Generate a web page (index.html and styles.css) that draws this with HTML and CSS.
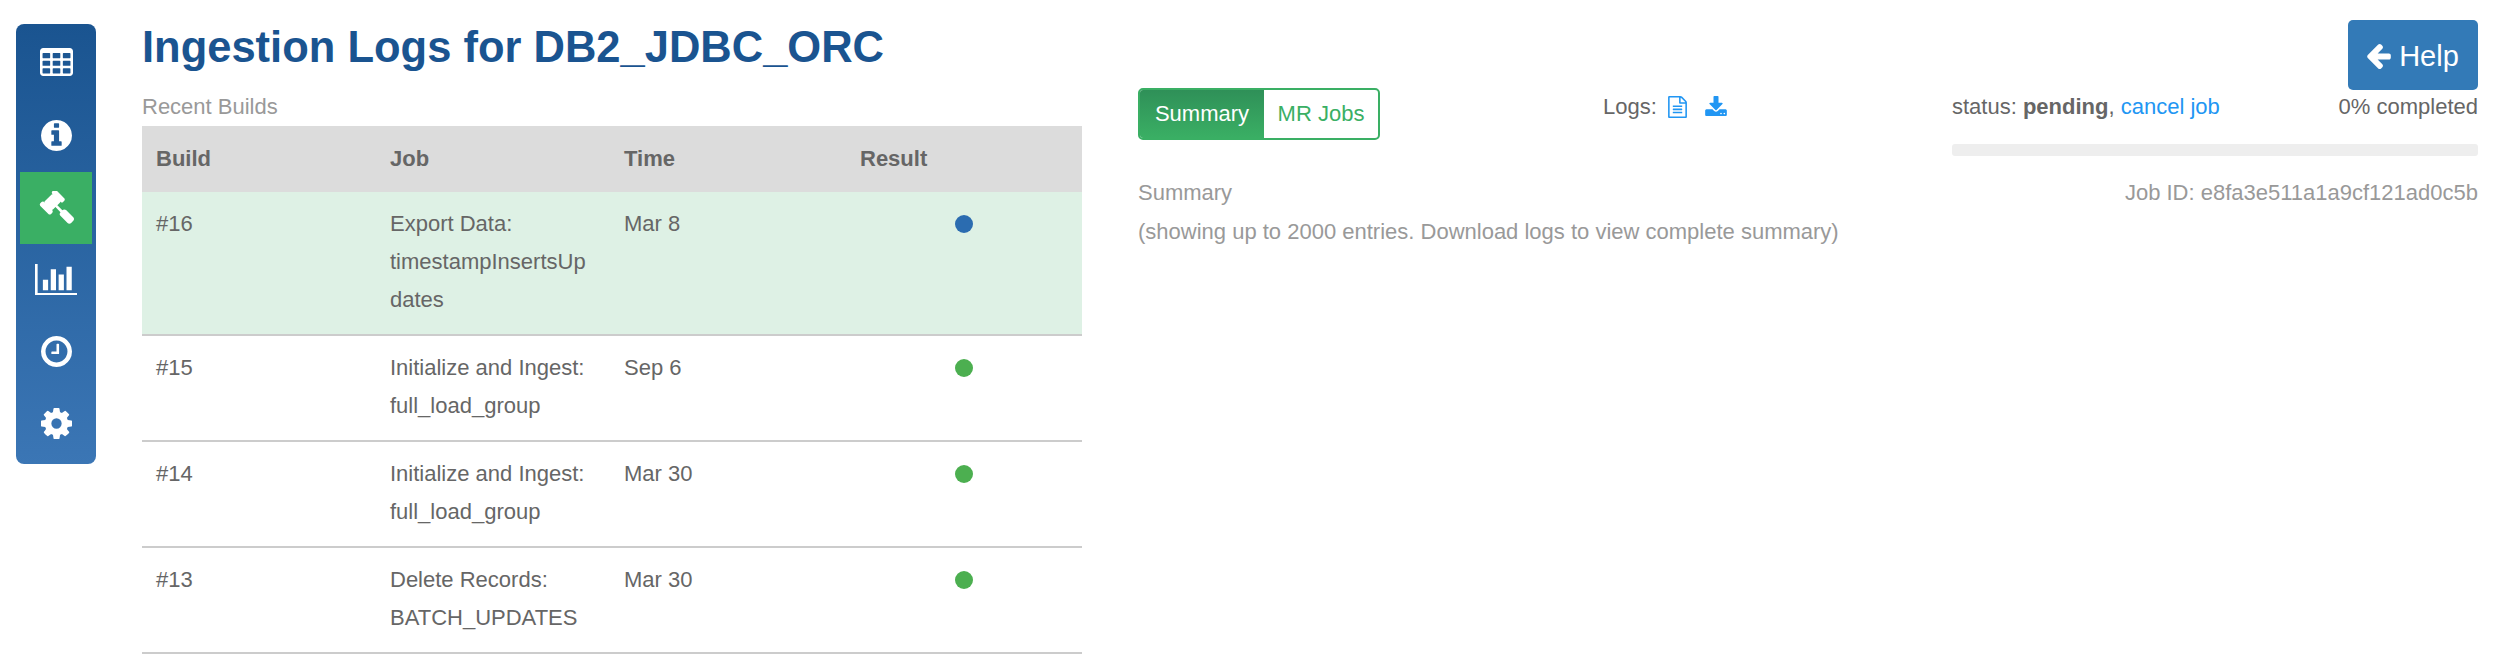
FILE: index.html
```html
<!DOCTYPE html>
<html lang="en">
<head>
<meta charset="utf-8">
<title>Ingestion Logs</title>
<link rel="stylesheet" href="styles.css">
</head>
<body>
<div class="page">
  <nav class="sidebar">
    <a class="nav-item"><svg class="ico-table" viewBox="64 128 1664 1408"><path fill="#fff" fill-rule="evenodd" d="M576 1376v-192q0-14-9-23t-23-9h-320q-14 0-23 9t-9 23v192q0 14 9 23t23 9h320q14 0 23-9t9-23zm0-384v-192q0-14-9-23t-23-9h-320q-14 0-23 9t-9 23v192q0 14 9 23t23 9h320q14 0 23-9t9-23zm512 384v-192q0-14-9-23t-23-9h-320q-14 0-23 9t-9 23v192q0 14 9 23t23 9h320q14 0 23-9t9-23zm-512-768v-192q0-14-9-23t-23-9h-320q-14 0-23 9t-9 23v192q0 14 9 23t23 9h320q14 0 23-9t9-23zm512 384v-192q0-14-9-23t-23-9h-320q-14 0-23 9t-9 23v192q0 14 9 23t23 9h320q14 0 23-9t9-23zm512 384v-192q0-14-9-23t-23-9h-320q-14 0-23 9t-9 23v192q0 14 9 23t23 9h320q14 0 23-9t9-23zm-512-768v-192q0-14-9-23t-23-9h-320q-14 0-23 9t-9 23v192q0 14 9 23t23 9h320q14 0 23-9t9-23zm512 384v-192q0-14-9-23t-23-9h-320q-14 0-23 9t-9 23v192q0 14 9 23t23 9h320q14 0 23-9t9-23zm0-384v-192q0-14-9-23t-23-9h-320q-14 0-23 9t-9 23v192q0 14 9 23t23 9h320q14 0 23-9t9-23zm128-320v1088q0 66-47 113t-113 47h-1344q-66 0-113-47t-47-113v-1088q0-66 47-113t113-47h1344q66 0 113 47t47 113z"/></svg></a>
    <a class="nav-item"><svg class="ico-round" viewBox="128 128 1536 1536"><path fill="#fff" fill-rule="evenodd" d="M1152 1376v-160q0-14-9-23t-23-9h-96v-512q0-14-9-23t-23-9h-320q-14 0-23 9t-9 23v160q0 14 9 23t23 9h96v320h-96q-14 0-23 9t-9 23v160q0 14 9 23t23 9h448q14 0 23-9t9-23zm-128-896v-160q0-14-9-23t-23-9h-192q-14 0-23 9t-9 23v160q0 14 9 23t23 9h192q14 0 23-9t9-23zm640 416q0 209-103 385.500t-279.500 279.500-385.500 103-385.500-103-279.500-279.500-103-385.500 103-385.500 279.500-279.500 385.500-103 385.500 103 279.500 279.500 103 385.500z"/></svg></a>
    <a class="nav-item active"><svg class="ico-gavel" viewBox="0 0 1771 1643"><path fill="#fff" d="M1771 1408q0 53-37 90l-107 108q-39 37-91 37-53 0-90-37l-363-364q-38-36-38-90 0-53 43-96l-256-256-126 126q-14 14-34 14t-34-14q2 2 12.500 12t12.500 13 10 11.500 10 13.500 6 13.500 5.500 16.500 1.500 18q0 38-28 68-3 3-16.500 18t-19 20.500-18.500 16.500-22 15.500-22 9-26 4.500q-40 0-68-28l-408-408q-28-28-28-68 0-13 4.500-26t9-22 15.500-22 16.500-18.500 20.500-19 18-16.500q30-28 68-28 10 0 18 1.500t16.500 5.500 13.500 6 13.500 10 11.500 10 13 12.500 12 12.500q-14-14-14-34t14-34l348-348q14-14 34-14t34 14q-2-2-12.500-12t-12.500-13-10-11.500-10-13.500-6-13.500-5.500-16.500-1.500-18q0-38 28-68 3-3 16.500-18t19-20.500 18.500-16.500 22-15.500 22-9 26-4.500q40 0 68 28l408 408q28 28 28 68 0 13-4.500 26t-9 22-15.500 22-16.500 18.500-20.500 19-18 16.500q-30 28-68 28-10 0-18-1.500t-16.500-5.500-13.500-6-13.500-10-11.500-10-13-12.500-12-12.500q14 14 14 34t-14 34l-126 126 256 256q43-43 96-43 52 0 91 37l363 363q37 39 37 91z"/></svg></a>
    <a class="nav-item"><svg class="ico-chart" viewBox="0 128 2048 1536"><path fill="#fff" d="M640 896v512h-256v-512h256zm384-512v1024h-256v-1024h256zm1024 1152v128h-2048v-1536h128v1408h1920zm-640-896v768h-256v-768h256zm384-384v1152h-256v-1152h256z"/></svg></a>
    <a class="nav-item"><svg class="ico-round" viewBox="128 128 1536 1536"><path fill="#fff" fill-rule="evenodd" d="M1024 544v448q0 14-9 23t-23 9h-320q-14 0-23-9t-9-23v-64q0-14 9-23t23-9h224v-352q0-14 9-23t23-9h64q14 0 23 9t9 23zm416 352q0-148-73-273t-198-198-273-73-273 73-198 198-73 273 73 273 198 198 273 73 273-73 198-198 73-273zm224 0q0 209-103 385.500t-279.500 279.500-385.500 103-385.500-103-279.500-279.500-103-385.500 103-385.500 279.500-279.500 385.500-103 385.500 103 279.500 279.500 103 385.500z"/></svg></a>
    <a class="nav-item"><svg class="ico-round" viewBox="128 128 1536 1536"><path fill="#fff" fill-rule="evenodd" d="M1152 896q0-106-75-181t-181-75-181 75-75 181 75 181 181 75 181-75 75-181zm512-109v222q0 12-8 23t-20 13l-185 28q-19 54-39 91 35 50 107 138 10 12 10 25t-9 23q-27 37-99 108t-94 71q-12 0-26-9l-138-108q-44 23-91 38-16 136-29 186-7 28-36 28h-222q-14 0-24.500-8.500t-11.500-21.500l-28-184q-49-16-90-37l-141 107q-10 9-25 9-14 0-25-11-126-114-165-168-7-10-7-23 0-12 8-23 15-21 51-66.500t54-70.500q-27-50-41-99l-183-27q-13-2-21-12.500t-8-23.500v-222q0-12 8-23t19-13l186-28q14-46 39-92-40-57-107-138-10-12-10-24 0-10 9-23 26-36 98.500-107.500t94.500-71.500q13 0 26 10l138 107q44-23 91-38 16-136 29-186 7-28 36-28h222q14 0 24.500 8.500t11.500 21.500l28 184q49 16 90 37l142-107q9-9 24-9 13 0 25 10 129 119 165 170 7 8 7 22 0 12-8 23-15 21-51 66.500t-54 70.500q26 50 41 98l183 28q13 2 21 12.500t8 23.500z"/></svg></a>
  </nav>
  <main class="left">
    <h1 class="title">Ingestion Logs for DB2_JDBC_ORC</h1>
    <div class="caption">Recent Builds</div>
    <table class="builds">
      <thead>
        <tr><th class="c1">Build</th><th class="c2">Job</th><th class="c3">Time</th><th class="c4">Result</th></tr>
      </thead>
      <tbody>
        <tr class="current"><td>#16</td><td>Export Data: timestampInsertsUpdates</td><td>Mar 8</td><td><span class="dot blue"></span></td></tr>
        <tr><td>#15</td><td>Initialize and Ingest: full_load_group</td><td>Sep 6</td><td><span class="dot green"></span></td></tr>
        <tr><td>#14</td><td>Initialize and Ingest: full_load_group</td><td>Mar 30</td><td><span class="dot green"></span></td></tr>
        <tr><td>#13</td><td>Delete Records: BATCH_UPDATES</td><td>Mar 30</td><td><span class="dot green"></span></td></tr>
      </tbody>
    </table>
  </main>
  <section class="right">
    <div class="help-row"><a class="help"><svg class="help-arrow" viewBox="192 181 1472 1558"><path fill="#fff" d="M1664 896v128q0 53-32.500 90.500t-84.500 37.500h-704l293 294q38 36 38 90t-38 90l-75 76q-37 37-90 37-52 0-91-37l-651-652q-37-37-37-90 0-52 37-91l651-650q38-38 91-38 52 0 90 38l75 74q38 38 38 91t-38 91l-293 293h704q52 0 84.500 37.500t32.500 90.500z"/></svg>Help</a></div>
    <div class="toolbar">
      <div class="tabs"><span class="tab on">Summary</span><span class="tab">MR Jobs</span></div>
      <div class="logs">
        <span>Logs:</span>
        <svg class="log-file" viewBox="128 0 1536 1792"><path fill="#2196f3" fill-rule="evenodd" d="M1596 380q28 28 48 76t20 88v1152q0 40-28 68t-68 28h-1344q-40 0-68-28t-28-68v-1600q0-40 28-68t68-28h896q40 0 88 20t76 48zm-444-244v376h376q-10-29-22-41l-313-313q-12-12-41-22zm384 1528v-1024h-416q-40 0-68-28t-28-68v-416h-768v1536h1280zm-1024-864q0-14 9-23t23-9h704q14 0 23 9t9 23v64q0 14-9 23t-23 9h-704q-14 0-23-9t-9-23v-64zm736 224q14 0 23 9t9 23v64q0 14-9 23t-23 9h-704q-14 0-23-9t-9-23v-64q0-14 9-23t23-9h704zm0 256q14 0 23 9t9 23v64q0 14-9 23t-23 9h-704q-14 0-23-9t-9-23v-64q0-14 9-23t23-9h704z"/></svg>
        <svg class="log-dl" viewBox="64 0 1664 1536"><path fill="#2196f3" fill-rule="evenodd" d="M1344 1344q0-26-19-45t-45-19-45 19-19 45 19 45 45 19 45-19 19-45zm256 0q0-26-19-45t-45-19-45 19-19 45 19 45 45 19 45-19 19-45zm128-224v320q0 40-28 68t-68 28h-1472q-40 0-68-28t-28-68v-320q0-40 28-68t68-28h465l135 136q58 56 136 56t136-56l136-136h464q40 0 68 28t28 68zm-325-569q17 41-14 70l-448 448q-18 19-45 19t-45-19l-448-448q-31-29-14-70 17-39 59-39h256v-448q0-26 19-45t45-19h256q26 0 45 19t19 45v448h256q42 0 59 39z"/></svg>
      </div>
      <div class="status">
        <div class="status-line"><span>status: <b>pending</b>, <a class="link">cancel job</a></span><span>0% completed</span></div>
        <div class="bar"></div>
      </div>
    </div>
    <div class="meta">
      <div><div>Summary</div><div>(showing up to 2000 entries. Download logs to view complete summary)</div></div>
      <div>Job ID: e8fa3e511a1a9cf121ad0c5b</div>
    </div>
  </section>
</div>
</body>
</html>
```
FILE: styles.css
```css
* { box-sizing: border-box; }
html, body { margin: 0; padding: 0; background: #fff; }
body { font-family: "Liberation Sans", Arial, sans-serif; font-size: 22px; color: #666; height: 663px; overflow: hidden; }
.page { display: flex; align-items: flex-start; padding: 0 26px 0 16px; }
.sidebar { width: 80px; height: 440px; margin-top: 24px; padding: 4px; border-radius: 8px; background: linear-gradient(#1a5490, #3b76b5); display: flex; flex-direction: column; flex: none; }
.nav-item { height: 72px; padding-bottom: 1px; display: flex; align-items: center; justify-content: center; }
.nav-item.active { background: #3aaf64; }
.ico-table { width: 33px; height: 28px; margin-bottom: 3px; }
.ico-round { width: 31px; height: 31px; }
.ico-gavel { width: 35px; height: 33px; }
.ico-chart { width: 42px; height: 31.500px; }
.left { width: 940px; margin-left: 46px; flex: none; }
.title { margin: 23px 0 0; font-size: 43.500px; line-height: 48px; font-weight: bold; color: #1a5490; }
.caption { margin-top: 24px; height: 31px; line-height: 24px; color: #999; }
.builds { width: 940px; border-collapse: separate; border-spacing: 0; table-layout: fixed; }
.builds th { background: #dcdcdc; height: 66px; padding: 0 14px; text-align: left; font-weight: bold; }
.c1, .c2 { width: 234px; }
.c3, .c4 { width: 236px; }
.builds td { padding: 13px 14px 15px; line-height: 38px; vertical-align: top; overflow-wrap: anywhere; border-bottom: 2px solid #ccc; }
.builds tr.current td { background: #def1e5; }
.dot { display: block; width: 18px; height: 18px; margin: 10px auto 0; border-radius: 50%; }
.dot.blue { background: #2b6cb0; }
.dot.green { background: #4caf50; }
.right { flex: 1; margin-left: 56px; min-width: 0; }
.help-row { display: flex; justify-content: flex-end; height: 70px; margin-top: 20px; margin-bottom: -2px; }
.help { width: 130px; height: 70px; padding-top: 2px; background: #337ab7; color: #fff; border-radius: 5px; font-size: 29px; display: flex; align-items: center; justify-content: center; gap: 8px; }
.help-arrow { width: 24px; height: 25px; }
.toolbar { display: flex; align-items: flex-start; }
.tabs { width: 242px; height: 52px; border: 2px solid #3aaf64; border-radius: 5px; display: flex; overflow: hidden; flex: none; }
.tab { flex: none; width: 114px; line-height: 48px; text-align: center; color: #3aaf64; }
.tab.on { width: 124px; background: linear-gradient(#2f9058, #3aaf64); color: #fff; }
.logs { margin-left: 223px; width: 349px; flex: none; display: flex; align-items: center; height: 24px; margin-top: 7px; }
.log-file { width: 19px; height: 22px; margin-left: 11px; }
.log-dl { width: 22px; height: 20px; margin-left: 18px; margin-bottom: 2px; }
.status { width: 526px; flex: none; margin-top: 7px; }
.status-line { display: flex; justify-content: space-between; height: 24px; line-height: 24px; }
.link { color: #2196f3; }
.bar { height: 12px; margin-top: 25px; background: #eee; border-radius: 3px; }
.meta { display: flex; justify-content: space-between; margin-top: 17px; color: #999; line-height: 39px; }
```
